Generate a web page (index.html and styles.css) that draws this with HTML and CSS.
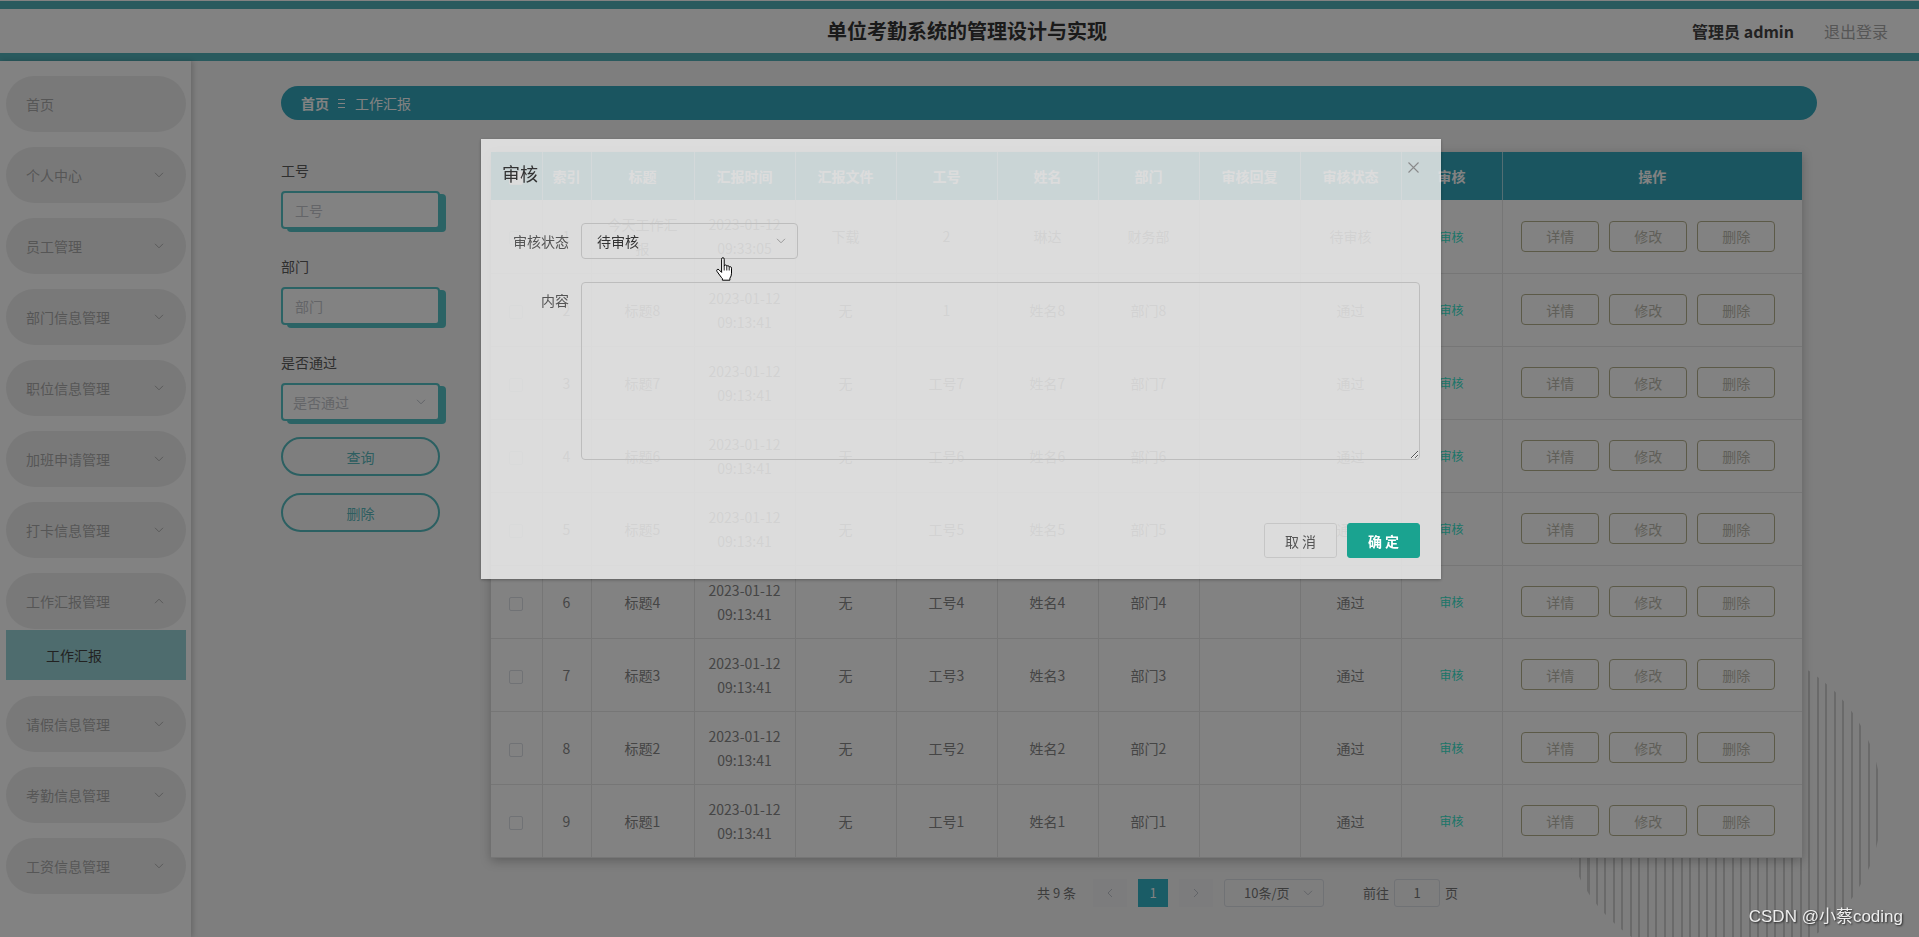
FILE: index.html
```html
<!DOCTYPE html>
<html lang="zh-CN">
<head>
<meta charset="utf-8">
<title>单位考勤系统的管理设计与实现</title>
<link rel="stylesheet" href="styles.css">
</head>
<body>
<header class="topbar">
  <div class="brand">单位考勤系统的管理设计与实现</div>
  <div class="user">
    <span class="user-name">管理员 admin</span>
    <span class="logout">退出登录</span>
  </div>
</header>
<div class="layout">
  <aside class="sidebar">
    <ul class="menu">
      <li class="menu-item"><span>首页</span></li>
      <li class="menu-item"><span>个人中心</span><svg class="chev" viewBox="0 0 10 6"><path d="M1 .8l4 4 4-4"/></svg></li>
      <li class="menu-item"><span>员工管理</span><svg class="chev" viewBox="0 0 10 6"><path d="M1 .8l4 4 4-4"/></svg></li>
      <li class="menu-item"><span>部门信息管理</span><svg class="chev" viewBox="0 0 10 6"><path d="M1 .8l4 4 4-4"/></svg></li>
      <li class="menu-item"><span>职位信息管理</span><svg class="chev" viewBox="0 0 10 6"><path d="M1 .8l4 4 4-4"/></svg></li>
      <li class="menu-item"><span>加班申请管理</span><svg class="chev" viewBox="0 0 10 6"><path d="M1 .8l4 4 4-4"/></svg></li>
      <li class="menu-item"><span>打卡信息管理</span><svg class="chev" viewBox="0 0 10 6"><path d="M1 .8l4 4 4-4"/></svg></li>
      <li class="menu-item open"><span>工作汇报管理</span><svg class="chev" viewBox="0 0 10 6"><path d="M1 5.2l4-4 4 4"/></svg></li>
      <li class="submenu-item">工作汇报</li>
      <li class="menu-item"><span>请假信息管理</span><svg class="chev" viewBox="0 0 10 6"><path d="M1 .8l4 4 4-4"/></svg></li>
      <li class="menu-item"><span>考勤信息管理</span><svg class="chev" viewBox="0 0 10 6"><path d="M1 .8l4 4 4-4"/></svg></li>
      <li class="menu-item"><span>工资信息管理</span><svg class="chev" viewBox="0 0 10 6"><path d="M1 .8l4 4 4-4"/></svg></li>
    </ul>
  </aside>
  <main class="main">
    <div class="deco"></div>
    <nav class="crumb">
      <b>首页</b>
      <svg class="crumb-sep" viewBox="0 0 7 11"><path d="M0 1.5h7M0 5.5h7M0 9.5h7"/></svg>
      <span>工作汇报</span>
    </nav>
    <div class="content">
      <div class="search">
        <div class="field-label">工号</div>
        <input class="field" placeholder="工号">
        <div class="field-label gap">部门</div>
        <input class="field" placeholder="部门">
        <div class="field-label gap">是否通过</div>
        <div class="field select"><span class="ph">是否通过</span><svg class="chev small" viewBox="0 0 10 6"><path d="M1 .8l4 4 4-4"/></svg></div>
        <button class="pill-btn first">查询</button>
        <button class="pill-btn">删除</button>
      </div>
      <div class="table-area">
        <table class="grid">
          <colgroup>
            <col style="width:51px"><col style="width:49px"><col style="width:103px"><col style="width:101px"><col style="width:101px"><col style="width:101px"><col style="width:101px"><col style="width:101px"><col style="width:101px"><col style="width:101px"><col style="width:101px"><col style="width:300px">
          </colgroup>
          <thead>
            <tr><th><i class="cb"></i></th><th>索引</th><th>标题</th><th>汇报时间</th><th>汇报文件</th><th>工号</th><th>姓名</th><th>部门</th><th>审核回复</th><th>审核状态</th><th>审核</th><th>操作</th></tr>
          </thead>
          <tbody>
            <tr><td><i class="cb"></i></td><td>1</td><td>今天工作汇报</td><td>2023-01-12 09:33:05</td><td>下载</td><td>2</td><td>琳达</td><td>财务部</td><td></td><td>待审核</td><td><a class="audit">审核</a></td><td><div class="ops"><button>详情</button><button>修改</button><button>删除</button></div></td></tr>
            <tr><td><i class="cb"></i></td><td>2</td><td>标题8</td><td>2023-01-12 09:13:41</td><td>无</td><td>1</td><td>姓名8</td><td>部门8</td><td></td><td>通过</td><td><a class="audit">审核</a></td><td><div class="ops"><button>详情</button><button>修改</button><button>删除</button></div></td></tr>
            <tr><td><i class="cb"></i></td><td>3</td><td>标题7</td><td>2023-01-12 09:13:41</td><td>无</td><td>工号7</td><td>姓名7</td><td>部门7</td><td></td><td>通过</td><td><a class="audit">审核</a></td><td><div class="ops"><button>详情</button><button>修改</button><button>删除</button></div></td></tr>
            <tr><td><i class="cb"></i></td><td>4</td><td>标题6</td><td>2023-01-12 09:13:41</td><td>无</td><td>工号6</td><td>姓名6</td><td>部门6</td><td></td><td>通过</td><td><a class="audit">审核</a></td><td><div class="ops"><button>详情</button><button>修改</button><button>删除</button></div></td></tr>
            <tr><td><i class="cb"></i></td><td>5</td><td>标题5</td><td>2023-01-12 09:13:41</td><td>无</td><td>工号5</td><td>姓名5</td><td>部门5</td><td></td><td>通过</td><td><a class="audit">审核</a></td><td><div class="ops"><button>详情</button><button>修改</button><button>删除</button></div></td></tr>
            <tr><td><i class="cb"></i></td><td>6</td><td>标题4</td><td>2023-01-12 09:13:41</td><td>无</td><td>工号4</td><td>姓名4</td><td>部门4</td><td></td><td>通过</td><td><a class="audit">审核</a></td><td><div class="ops"><button>详情</button><button>修改</button><button>删除</button></div></td></tr>
            <tr><td><i class="cb"></i></td><td>7</td><td>标题3</td><td>2023-01-12 09:13:41</td><td>无</td><td>工号3</td><td>姓名3</td><td>部门3</td><td></td><td>通过</td><td><a class="audit">审核</a></td><td><div class="ops"><button>详情</button><button>修改</button><button>删除</button></div></td></tr>
            <tr><td><i class="cb"></i></td><td>8</td><td>标题2</td><td>2023-01-12 09:13:41</td><td>无</td><td>工号2</td><td>姓名2</td><td>部门2</td><td></td><td>通过</td><td><a class="audit">审核</a></td><td><div class="ops"><button>详情</button><button>修改</button><button>删除</button></div></td></tr>
            <tr><td><i class="cb"></i></td><td>9</td><td>标题1</td><td>2023-01-12 09:13:41</td><td>无</td><td>工号1</td><td>姓名1</td><td>部门1</td><td></td><td>通过</td><td><a class="audit">审核</a></td><td><div class="ops"><button>详情</button><button>修改</button><button>删除</button></div></td></tr>
          </tbody>
        </table>
        <div class="pager">
          <span class="total">共 9 条</span>
          <span class="pg-btn prev"><svg viewBox="0 0 6 10"><path d="M5 1L1 5l4 4"/></svg></span>
          <span class="pg-num">1</span>
          <span class="pg-btn next"><svg viewBox="0 0 6 10"><path d="M1 1l4 4-4 4"/></svg></span>
          <span class="pg-size">10条/页<svg class="chev small" viewBox="0 0 10 6"><path d="M1 .8l4 4 4-4"/></svg></span>
          <span class="jump">前往</span>
          <span class="pg-input">1</span>
          <span class="jump-end">页</span>
        </div>
      </div>
    </div>
  </main>
</div>

<div class="mask"></div>

<div class="dialog">
  <div class="dialog-head">
    <span class="dialog-title">审核</span>
    <svg class="dialog-close" viewBox="0 0 11 11"><path d="M.5.5l10 10M10.5.5l-10 10"/></svg>
  </div>
  <div class="dialog-body">
    <div class="form-row">
      <label class="form-label">审核状态</label>
      <div class="d-select"><span>待审核</span><svg class="chev d" viewBox="0 0 10 6"><path d="M1 .8l4 4 4-4"/></svg></div>
    </div>
    <div class="form-row second">
      <label class="form-label">内容</label>
      <textarea class="d-textarea"></textarea>
    </div>
  </div>
  <div class="dialog-foot">
    <button class="btn-cancel">取 消</button>
    <button class="btn-ok">确 定</button>
  </div>
</div>

<svg class="cursor" viewBox="0 0 18 24"><path d="M6.6 2.2Q6.6.7 7.9.7Q9.2.7 9.2 2.2L9.2 9.2Q9.5 8 10.6 8Q11.7 8 11.8 9.3Q12.2 8.6 13.1 8.7Q14.1 8.8 14.2 10.1Q14.6 9.6 15.4 9.7Q16.5 9.9 16.5 11.2L16.5 16.2Q16.5 19.2 14.9 21.2L14.9 23.2L7.4 23.2L7.4 21.6Q6.5 20.6 5.3 19L2 14.4Q1.3 13.2 2.2 12.5Q3.1 11.9 4 12.8L6.6 15.4Z" fill="#fff" stroke="#000" stroke-width="1" stroke-linejoin="round"/><path d="M9.2 9.2V13.5M11.8 9.3V13.5M14.2 10.1V13.5" stroke="#000" stroke-width=".9" fill="none"/></svg>

<div class="watermark">CSDN @小蔡coding</div>
</body>
</html>
```

FILE: styles.css
```css
* { box-sizing: border-box; }

html, body {
  margin: 0;
  height: 100%;
  overflow: hidden;
}

body {
  padding-top: 1px;
  background: #ffffff;
  font-family: "Noto Sans CJK SC", "Noto Sans", sans-serif;
  font-size: 14px;
  color: #333;
}

/* ---------- top bar ---------- */
.topbar {
  height: 60px;
  border-top: 8px solid #52b0b8;
  border-bottom: 8px solid #52b0b8;
  background: #ffffff;
  display: grid;
  grid-template-columns: 1fr auto 1fr;
  align-items: center;
  padding: 0 31px 0 46px;
}

.brand {
  grid-column: 2;
  font-size: 20px;
  font-weight: 700;
  color: #333;
  line-height: 28px;
}

.user {
  grid-column: 3;
  justify-self: end;
  display: flex;
  gap: 30px;
  font-size: 16px;
  line-height: 24px;
}

.user-name { color: #444; font-weight: 600; }
.logout { color: #aaa; }

/* ---------- layout ---------- */
.layout {
  display: flex;
  height: calc(100vh - 61px);
}

.sidebar {
  width: 191px;
  flex: none;
  background: #ffffff;
  box-shadow: 2px 0 5px rgba(0, 0, 0, 0.18);
  position: relative;
  z-index: 2;
}

.menu {
  list-style: none;
  margin: 0;
  padding: 15px 5px 0 6px;
}

.menu-item {
  height: 56px;
  border-radius: 28px;
  background: #eeeeee;
  margin-bottom: 15px;
  display: flex;
  align-items: center;
  justify-content: space-between;
  padding: 0 22px 0 20px;
  color: #aaa;
  font-size: 14px;
}

.menu-item.open { margin-bottom: 1px; }

.chev {
  width: 10px;
  height: 6px;
  fill: none;
  stroke: #b0b0b0;
  stroke-width: 1;
}

.submenu-item {
  height: 50px;
  background: #99d4d8;
  color: #444;
  font-size: 14px;
  line-height: 50px;
  padding-left: 40px;
  margin-bottom: 16px;
}

/* ---------- main ---------- */
.main {
  flex: 1;
  position: relative;
  background: #f7f7f7;
  padding: 25px 102px 0 90px;
  overflow: hidden;
}

.deco {
  position: absolute;
  left: 1371px;
  top: 584px;
  width: 320px;
  height: 320px;
  border-radius: 50%;
  background: repeating-linear-gradient(90deg, #d0d0d0 0 2px, transparent 2px 8.5px);
  z-index: 0;
}

.crumb {
  position: relative;
  z-index: 1;
  height: 34px;
  border-radius: 17px;
  background: #33a7bc;
  color: #fff;
  display: flex;
  align-items: center;
  padding-left: 20px;
  font-size: 14px;
}

.crumb b { font-weight: 700; }

.crumb-sep {
  width: 7px;
  height: 11px;
  margin: 0 10px 0 9px;
  stroke: #fff;
  stroke-width: 1;
}

.content {
  position: relative;
  z-index: 1;
  display: flex;
  align-items: flex-start;
  gap: 45px;
  margin-top: 32px;
}

/* ---------- search ---------- */
.search {
  width: 165px;
  flex: none;
  padding-top: 8px;
  display: flex;
  flex-direction: column;
}

.field-label {
  font-size: 14px;
  line-height: 20px;
  color: #5c5c5c;
  margin-bottom: 11px;
}

.field-label.gap { margin-top: 27px; }

.field {
  width: 159px;
  height: 38px;
  border: 2px solid #55c3c7;
  border-radius: 4px;
  box-shadow: 6px 3px 0 0 #55c3c7;
  background: #fff;
  padding: 0 12px;
  font-family: inherit;
  font-size: 14px;
  color: #333;
  outline: none;
}

.field::placeholder { color: #c4c6cc; }

.select {
  display: flex;
  align-items: center;
  justify-content: space-between;
  padding: 0 12px 0 10px;
}

.ph { color: #c4c6cc; }

.chev.small { width: 10px; height: 6px; stroke: #c0c4cc; }

.pill-btn {
  width: 159px;
  height: 39px;
  border: 2px solid #55bcc0;
  border-radius: 20px;
  background: transparent;
  color: #5ab9bd;
  font-family: inherit;
  font-size: 14px;
  margin-top: 17px;
  padding: 0;
}

.pill-btn.first { margin-top: 16px; }

/* ---------- table ---------- */
.table-area {
  width: 1311px;
  flex: none;
}

.grid {
  width: 1311px;
  table-layout: fixed;
  border-collapse: collapse;
  background: #fff;
  box-shadow: 0 3px 10px rgba(0, 0, 0, 0.25);
  font-size: 14px;
}

.grid th {
  height: 48px;
  background: #33a7bc;
  color: #fff;
  font-weight: 700;
  text-align: center;
  padding: 0 10px;
  border-right: 1px solid rgba(255, 255, 255, 0.55);
}

.grid th:last-child { border-right: none; }

.grid td {
  height: 73px;
  text-align: center;
  vertical-align: middle;
  padding: 0 10px;
  line-height: 24px;
  color: #888;
  border-right: 1px solid #e8e8e8;
  border-bottom: 1px solid #e8e8e8;
}

.grid td:last-child { border-right: none; }

.cb {
  display: inline-block;
  width: 14px;
  height: 14px;
  border: 1px solid #dcdfe6;
  border-radius: 2px;
  background: #fff;
  vertical-align: middle;
}

.audit {
  color: #38e6cd;
  font-size: 12px;
}

.ops {
  display: flex;
  justify-content: center;
  gap: 10px;
  padding-right: 8px;
}

.ops button {
  width: 78px;
  height: 31px;
  border: 1px solid #b4b08e;
  border-radius: 4px;
  background: transparent;
  color: #bcbbae;
  font-family: inherit;
  font-size: 14px;
  padding: 0;
}

/* ---------- pager ---------- */
.pager {
  display: flex;
  align-items: center;
  height: 28px;
  margin-top: 21px;
  padding-left: 546px;
  font-size: 13px;
  color: #777;
}

.total { margin-right: 17px; }

.pg-btn {
  width: 34px;
  height: 28px;
  background: #f4f4f5;
  display: flex;
  align-items: center;
  justify-content: center;
}

.pg-btn svg {
  width: 6px;
  height: 10px;
  fill: none;
  stroke: #c0c4cc;
  stroke-width: 1;
}

.pg-num {
  width: 30px;
  height: 28px;
  margin: 0 11px;
  background: #33b4c8;
  color: #fff;
  text-align: center;
  line-height: 28px;
}

.pg-size {
  width: 100px;
  height: 28px;
  margin-left: 11px;
  border: 1px solid #dcdfe6;
  border-radius: 3px;
  display: flex;
  align-items: center;
  justify-content: space-between;
  padding: 0 10px 0 19px;
}

.jump { margin-left: 39px; margin-right: 5px; }

.pg-input {
  width: 46px;
  height: 28px;
  border: 1px solid #dcdfe6;
  border-radius: 3px;
  text-align: center;
  line-height: 26px;
}

.jump-end { margin-left: 5px; }

/* ---------- mask & dialog ---------- */
.mask {
  position: fixed;
  inset: 0;
  background: rgba(0, 0, 0, 0.49);
  z-index: 10;
}

.dialog {
  position: fixed;
  left: 481px;
  top: 139px;
  width: 960px;
  height: 440px;
  background: rgba(238, 238, 238, 0.83);
  box-shadow: 0 1px 3px rgba(0, 0, 0, 0.3);
  z-index: 20;
  display: flex;
  flex-direction: column;
}

.dialog-head {
  display: flex;
  justify-content: space-between;
  align-items: flex-start;
  padding: 22px 22px 0 21px;
}

.dialog-title {
  font-size: 18px;
  line-height: 24px;
  color: #333;
}

.dialog-close {
  width: 11px;
  height: 11px;
  margin-top: 1px;
  stroke: #8a8a8a;
  stroke-width: 1.1;
}

.dialog-body {
  padding: 38px 21px 0 20px;
}

.form-row {
  display: flex;
  align-items: flex-start;
}

.form-row.second { margin-top: 23px; }

.form-label {
  width: 80px;
  padding-right: 12px;
  text-align: right;
  line-height: 36px;
  font-size: 14px;
  color: #555;
}

.d-select {
  width: 217px;
  height: 36px;
  border: 1px solid #bdbdbd;
  border-radius: 4px;
  display: flex;
  align-items: center;
  justify-content: space-between;
  padding: 0 11px 0 15px;
  color: #333;
  font-size: 14px;
}

.chev.d { stroke: #999; }

.d-textarea {
  width: 839px;
  height: 178px;
  border: 1px solid #bdbdbd;
  border-radius: 4px;
  background: transparent;
  font-family: inherit;
  font-size: 14px;
  resize: vertical;
  outline: none;
}

.dialog-foot {
  margin-top: auto;
  display: flex;
  justify-content: flex-end;
  gap: 10px;
  padding: 0 21px 21px 0;
}

.btn-cancel,
.btn-ok {
  width: 73px;
  height: 35px;
  border-radius: 3px;
  font-family: inherit;
  font-size: 14px;
  padding: 0;
}

.btn-cancel {
  border: 1px solid #c6c6c6;
  background: transparent;
  color: #555;
}

.btn-ok {
  border: 1px solid #1aa390;
  background: #1aa390;
  color: #fff;
  font-weight: 600;
}

.cursor {
  position: fixed;
  left: 715px;
  top: 257px;
  width: 18px;
  height: 24px;
  z-index: 25;
}

.watermark {
  position: fixed;
  right: 16px;
  bottom: 10px;
  z-index: 30;
  font-family: "Liberation Sans", "Noto Sans CJK SC", sans-serif;
  font-size: 17px;
  color: #eeeeee;
  text-shadow: 1px 1px 2px rgba(0, 0, 0, 0.7);
}
```
